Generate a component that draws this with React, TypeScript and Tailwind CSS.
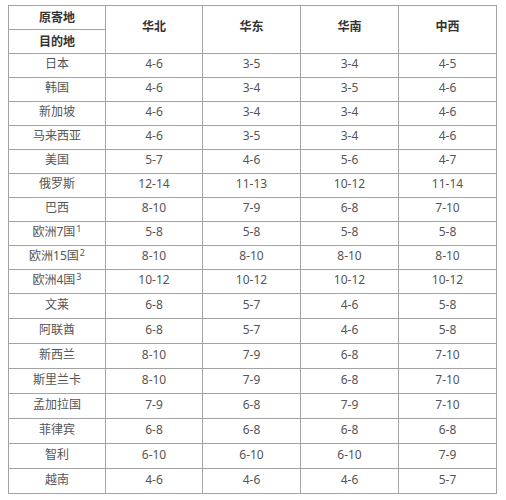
import React from "react";

type Row = { dest: string; sup?: string; v: [string, string, string, string] };

const rows: Row[] = [
  { dest: "日本", v: ["4-6", "3-5", "3-4", "4-5"] },
  { dest: "韩国", v: ["4-6", "3-4", "3-5", "4-6"] },
  { dest: "新加坡", v: ["4-6", "3-4", "3-4", "4-6"] },
  { dest: "马来西亚", v: ["4-6", "3-5", "3-4", "4-6"] },
  { dest: "美国", v: ["5-7", "4-6", "5-6", "4-7"] },
  { dest: "俄罗斯", v: ["12-14", "11-13", "10-12", "11-14"] },
  { dest: "巴西", v: ["8-10", "7-9", "6-8", "7-10"] },
  { dest: "欧洲7国", sup: "1", v: ["5-8", "5-8", "5-8", "5-8"] },
  { dest: "欧洲15国", sup: "2", v: ["8-10", "8-10", "8-10", "8-10"] },
  { dest: "欧洲4国", sup: "3", v: ["10-12", "10-12", "10-12", "10-12"] },
  { dest: "文莱", v: ["6-8", "5-7", "4-6", "5-8"] },
  { dest: "阿联酋", v: ["6-8", "5-7", "4-6", "5-8"] },
  { dest: "新西兰", v: ["8-10", "7-9", "6-8", "7-10"] },
  { dest: "斯里兰卡", v: ["8-10", "7-9", "6-8", "7-10"] },
  { dest: "孟加拉国", v: ["7-9", "6-8", "7-9", "7-10"] },
  { dest: "菲律宾", v: ["6-8", "6-8", "6-8", "6-8"] },
  { dest: "智利", v: ["6-10", "6-10", "6-10", "7-9"] },
  { dest: "越南", v: ["4-6", "4-6", "4-6", "5-7"] },
];

const cell = "border border-[#a3a3a3] text-center align-middle p-0";

export default function App() {
  return (
    <div
      className="w-[506px] h-[500px] bg-white pt-[5px] pl-[8px]"
      style={{ fontFamily: '"Noto Sans", "Noto Sans CJK SC", sans-serif' }}
    >
      <table className="border-collapse table-fixed w-[488px] border border-[#8a8a8a] text-[12px] leading-none">
        <colgroup>
          <col className="w-[97px]" />
          <col className="w-[97px]" />
          <col className="w-[98px]" />
          <col className="w-[98px]" />
          <col className="w-[98px]" />
        </colgroup>
        <thead>
          <tr className="h-[24px]">
            <td className={`${cell} font-bold text-[#333]`}>原寄地</td>
            {["华北", "华东", "华南", "中西"].map((h) => (
              <td key={h} rowSpan={2} className={`${cell} font-bold text-[#333] pb-[6px]`}>
                {h}
              </td>
            ))}
          </tr>
          <tr className="h-[24px]">
            <td className={`${cell} font-bold text-[#333]`}>目的地</td>
          </tr>
        </thead>
        <tbody>
          {rows.map((r, i) => (
            <tr key={r.dest} className={i < 10 ? "h-[24px]" : "h-[25px]"}>
              <td className={`${cell} text-[#555] pb-[3px]`}>
                {r.dest}
                {r.sup && <sup className="text-[9px] relative -top-[4px] ml-[1px]">{r.sup}</sup>}
              </td>
              {r.v.map((v, j) => (
                <td key={j} className={`${cell} text-[#555] pb-[3px]`}>
                  {v}
                </td>
              ))}
            </tr>
          ))}
        </tbody>
      </table>
    </div>
  );
}
